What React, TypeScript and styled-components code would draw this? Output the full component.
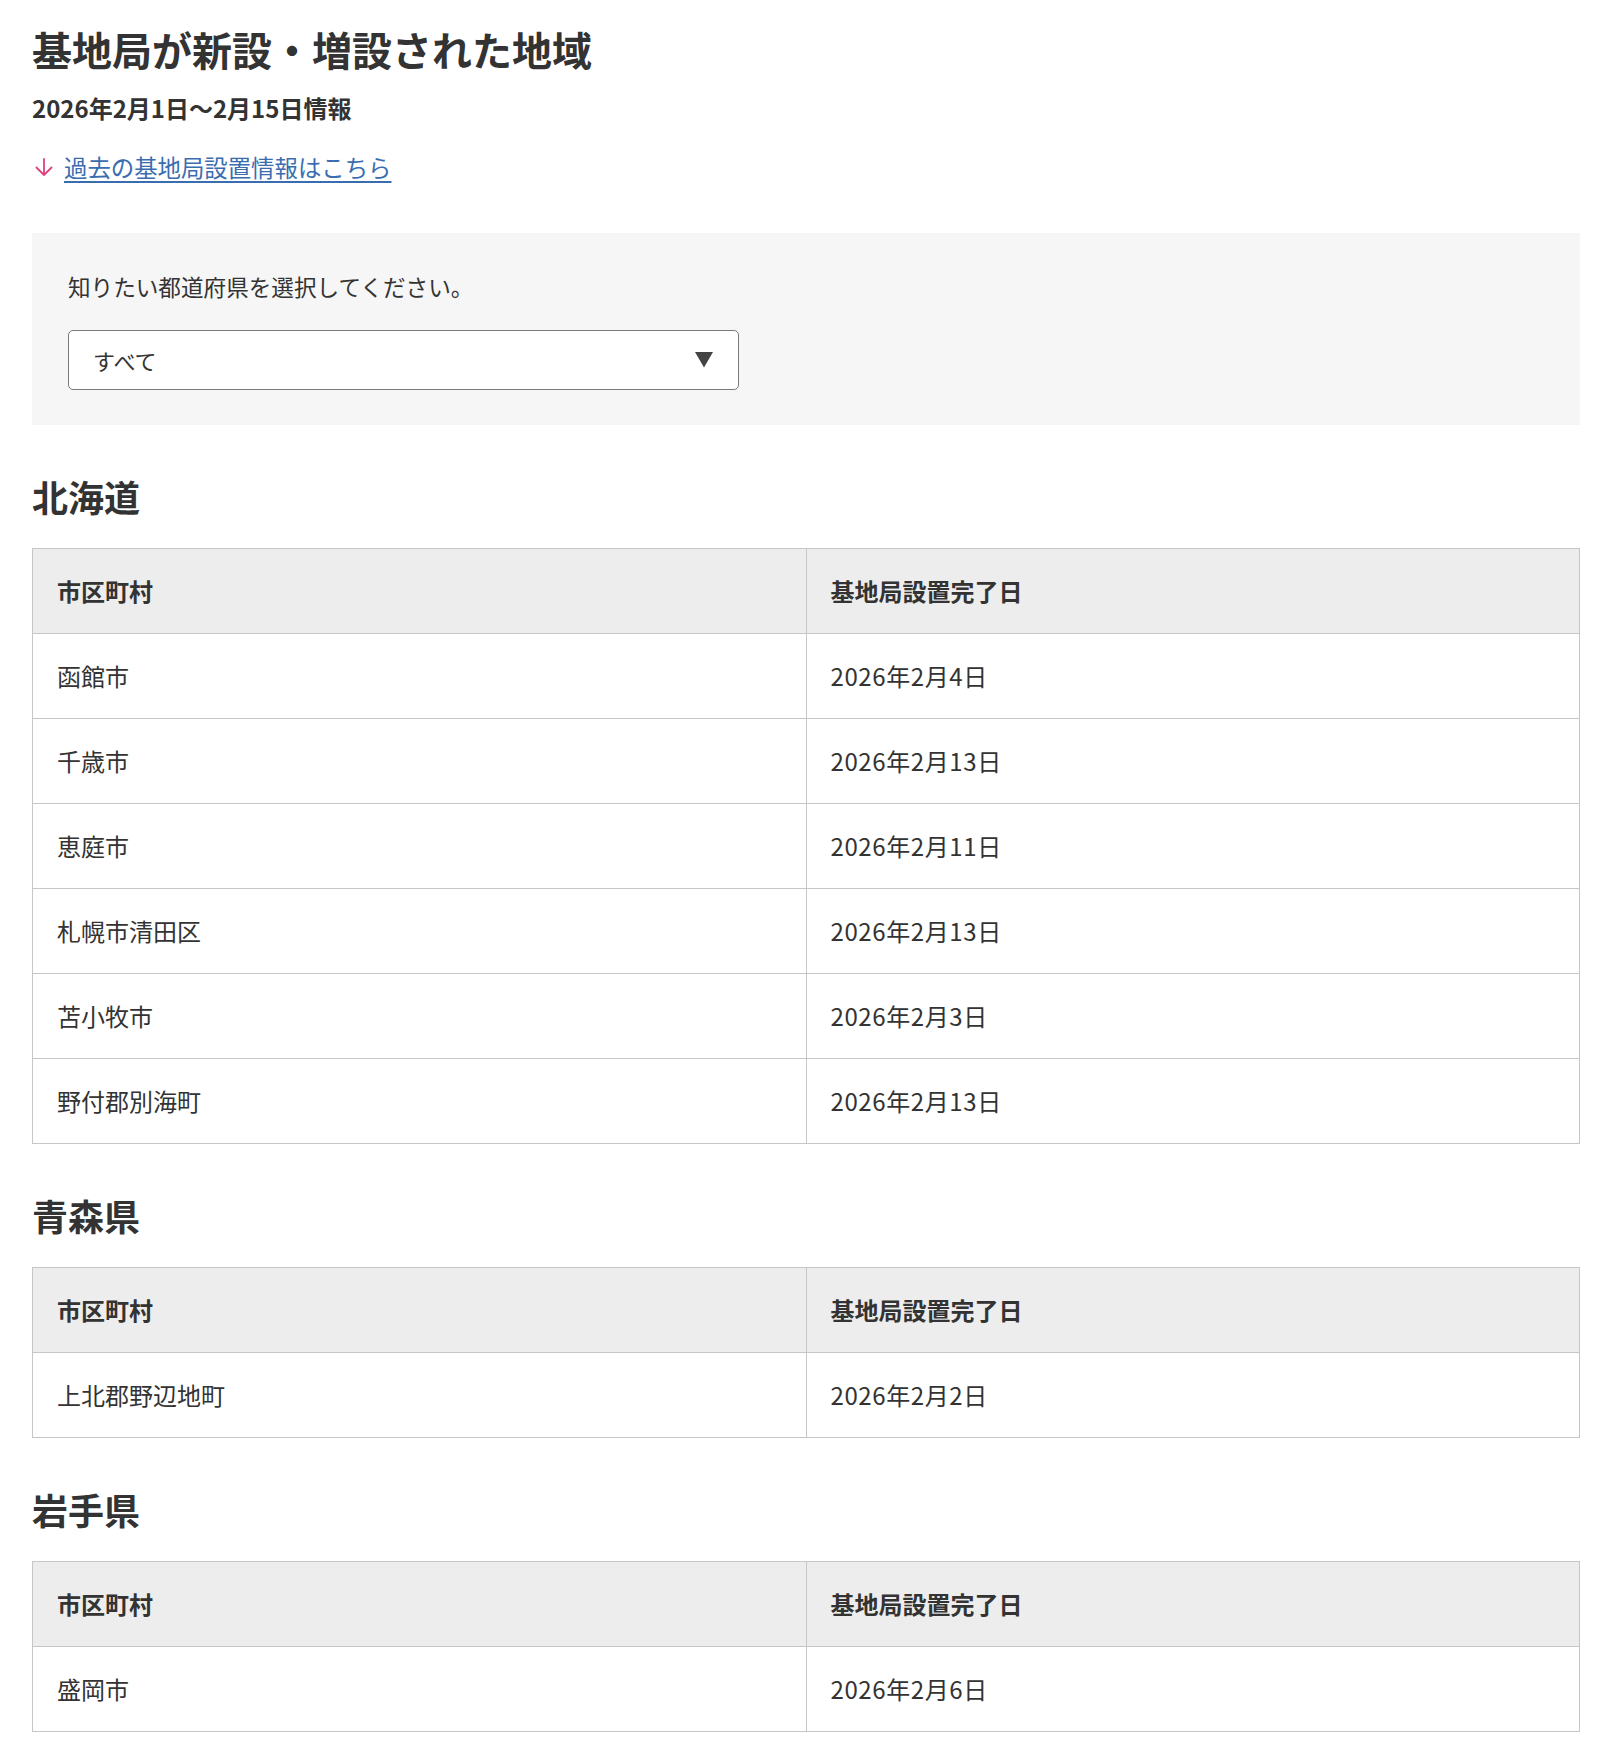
import React from "react";
import styled, { createGlobalStyle } from "styled-components";

const GlobalStyle = createGlobalStyle`
  html, body {
    margin: 0;
    padding: 0;
    background: #ffffff;
  }
  body {
    font-family: "Noto Sans CJK JP", "Noto Sans", sans-serif;
    color: #333333;
  }
`;

const Page = styled.main`
  padding: 20px 20px 0 32px;
`;

const Title = styled.h1`
  margin: 0;
  font-size: 40px;
  line-height: 58px;
  font-weight: 700;
  color: #333;
`;

const Period = styled.p`
  margin: 12px 0 0;
  font-size: 24px;
  line-height: 36px;
  font-weight: 700;
  color: #333;
`;

const LinkRow = styled.div`
  display: flex;
  margin-top: 23px;
`;

const PastLink = styled.a`
  display: inline-flex;
  align-items: center;
  gap: 11px;
  padding-left: 3px;
  font-size: 23.4px;
  line-height: 36px;
  color: #3a6db0;
  text-decoration: none;
  cursor: pointer;
`;

const LinkText = styled.span`
  text-decoration: underline;
  text-underline-offset: 4px;
  text-decoration-thickness: 1.5px;
`;

const FilterBox = styled.section`
  margin-top: 48px;
  background: #f6f6f6;
  padding: 36px 36px 35px;
`;

const FilterLabel = styled.label`
  display: block;
  font-size: 22.6px;
  line-height: 36px;
  color: #333;
`;

const SelectWrap = styled.div`
  position: relative;
  margin-top: 25px;
  width: 671px;
`;

const Select = styled.select`
  appearance: none;
  -webkit-appearance: none;
  width: 100%;
  height: 60px;
  box-sizing: border-box;
  border: 1px solid #7a7a7a;
  border-radius: 5px;
  background: #ffffff;
  padding: 0 60px 0 24px;
  font-family: "Noto Sans CJK JP", "Noto Sans", sans-serif;
  font-size: 22px;
  color: #333;
  outline: none;
`;

const Caret = styled.svg`
  position: absolute;
  right: 26px;
  top: 22px;
  pointer-events: none;
`;

const Section = styled.section`
  margin-top: 46px;
`;

const PrefHeading = styled.h2`
  margin: 0 0 27px;
  font-size: 36px;
  line-height: 50px;
  font-weight: 700;
  color: #333;
`;

const Table = styled.table`
  width: 100%;
  border-collapse: collapse;
  table-layout: fixed;
  border: 1px solid #c6c6c6;
`;

const HeadCell = styled.th`
  width: 50%;
  text-align: left;
  background: #ededed;
  border: 1px solid #c6c6c6;
  padding: 24px 24px;
  font-size: 24px;
  line-height: 36px;
  font-weight: 700;
  color: #333;
`;

const Cell = styled.td<{ $numeric?: boolean }>`
  border: 1px solid #c6c6c6;
  padding: 24px 24px;
  font-size: 24px;
  line-height: 36px;
  color: #333;
  background: #fff;
  letter-spacing: ${(p) => (p.$numeric ? "0.6px" : "0")};
`;

type Row = { city: string; date: string };
type Pref = { name: string; rows: Row[] };

const data: Pref[] = [
  {
    name: "北海道",
    rows: [
      { city: "函館市", date: "2026年2月4日" },
      { city: "千歳市", date: "2026年2月13日" },
      { city: "恵庭市", date: "2026年2月11日" },
      { city: "札幌市清田区", date: "2026年2月13日" },
      { city: "苫小牧市", date: "2026年2月3日" },
      { city: "野付郡別海町", date: "2026年2月13日" },
    ],
  },
  {
    name: "青森県",
    rows: [{ city: "上北郡野辺地町", date: "2026年2月2日" }],
  },
  {
    name: "岩手県",
    rows: [{ city: "盛岡市", date: "2026年2月6日" }],
  },
];

const DownArrow = () => (
  <svg width="18" height="18" viewBox="0 0 18 18" fill="none">
    <path
      d="M9 1V17M1.5 9.5L9 17l7.5-7.5"
      stroke="#e0407f"
      strokeWidth="1.8"
      strokeLinecap="round"
      strokeLinejoin="round"
    />
  </svg>
);

export default function App() {
  return (
    <>
      <GlobalStyle />
      <Page>
        <Title>基地局が新設・増設された地域</Title>
        <Period>2026年2月1日〜2月15日情報</Period>
        <LinkRow>
          <PastLink href="#past">
            <DownArrow />
            <LinkText>過去の基地局設置情報はこちら</LinkText>
          </PastLink>
        </LinkRow>

        <FilterBox>
          <FilterLabel htmlFor="pref">知りたい都道府県を選択してください。</FilterLabel>
          <SelectWrap>
            <Select id="pref" defaultValue="all">
              <option value="all">すべて</option>
              <option value="hokkaido">北海道</option>
              <option value="aomori">青森県</option>
              <option value="iwate">岩手県</option>
            </Select>
            <Caret width="18" height="16" viewBox="0 0 18 16">
              <path d="M0 0H18L9 15.5Z" fill="#444" />
            </Caret>
          </SelectWrap>
        </FilterBox>

        {data.map((pref) => (
          <Section key={pref.name}>
            <PrefHeading>{pref.name}</PrefHeading>
            <Table>
              <thead>
                <tr>
                  <HeadCell>市区町村</HeadCell>
                  <HeadCell>基地局設置完了日</HeadCell>
                </tr>
              </thead>
              <tbody>
                {pref.rows.map((r) => (
                  <tr key={r.city}>
                    <Cell>{r.city}</Cell>
                    <Cell $numeric>{r.date}</Cell>
                  </tr>
                ))}
              </tbody>
            </Table>
          </Section>
        ))}
      </Page>
    </>
  );
}
